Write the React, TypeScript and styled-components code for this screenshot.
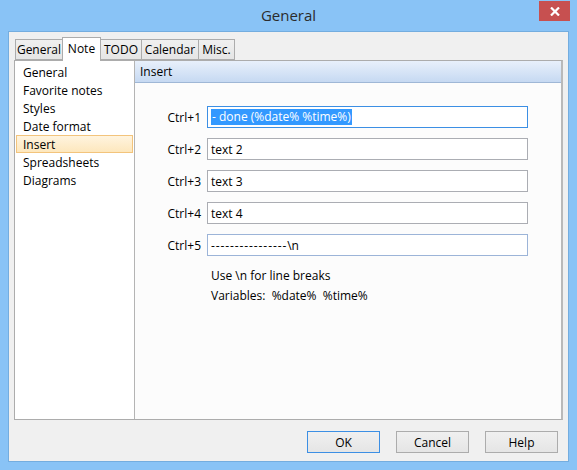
import * as React from 'react';
import styled, { createGlobalStyle, css } from 'styled-components';

const GlobalStyle = createGlobalStyle`
  html, body {
    margin: 0;
    padding: 0;
    background: #88c2f5;
  }
  body {
    font-family: "Segoe UI", "Open Sans", "Noto Sans", sans-serif;
    font-size: 12px;
    color: #000;
  }
`;

const Window = styled.div`
  width: 577px;
  height: 470px;
  background: #89c3f6;
  box-sizing: border-box;
  display: flex;
  flex-direction: column;
`;

const TitleBar = styled.div`
  position: relative;
  height: 31px;
  display: flex;
  align-items: center;
  justify-content: center;
  padding-bottom: 1px;
  box-sizing: border-box;
`;

const Title = styled.span`
  font-size: 15px;
  color: #2b2b2b;
`;

const CloseButton = styled.div`
  position: absolute;
  top: 1px;
  right: 7px;
  width: 31px;
  height: 20px;
  background: #c75050;
  display: flex;
  align-items: center;
  justify-content: center;
`;

const Client = styled.div`
  margin: 0 8px;
  height: 431px;
  box-sizing: border-box;
  background: #f0f0f0;
  border: 1px solid #74addf;
  display: flex;
  flex-direction: column;
`;

const TabRow = styled.div`
  display: flex;
  align-items: flex-end;
  padding: 5px 0 0 6px;
`;

const Tab = styled.div<{ $w: number; $active?: boolean }>`
  width: ${p => p.$w}px;
  height: 21px;
  box-sizing: border-box;
  border: 1px solid #acacac;
  border-left-width: 0;
  background: linear-gradient(#f0f0f0, #e5e5e5);
  display: flex;
  align-items: center;
  justify-content: center;
  padding-bottom: 1px;
  &:first-child {
    border-left-width: 1px;
  }
  ${p => p.$active && css`
    height: 24px;
    margin-bottom: -1px;
    background: #fff;
    border-bottom: none;
    border-left-width: 1px;
    margin-left: -1px;
    position: relative;
    z-index: 1;
    padding-bottom: 3px;
  `}
`;

const Page = styled.div`
  margin: 0 5px;
  height: 360px;
  box-sizing: border-box;
  border: 1px solid #acacac;
  border-right: 2px solid #b9b9b9;
  display: flex;
  background: #fcfcfc;
`;

const List = styled.div`
  width: 117px;
  border-right: 1px solid #b4b4b4;
  background: #fff;
  padding: 2px 1px 0 1px;
  box-sizing: content-box;
`;

const ListItem = styled.div<{ $selected?: boolean }>`
  height: 18px;
  line-height: 17px;
  padding-left: 6px;
  box-sizing: border-box;
  border: 1px solid transparent;
  ${p => p.$selected && css`
    border-color: #f3c47c;
    background: linear-gradient(#fff4df, #fde7bd);
  `}
`;

const Panel = styled.div`
  flex: 1;
  display: flex;
  flex-direction: column;
`;

const PanelHeader = styled.div`
  height: 22px;
  box-sizing: border-box;
  padding-left: 5px;
  display: flex;
  align-items: center;
  background: linear-gradient(#e8f0fb, #c6d9f2);
  border-bottom: 1px solid #9fb7d6;
`;

const Form = styled.div`
  display: grid;
  grid-template-columns: 66px 321px;
  column-gap: 6px;
  row-gap: 10px;
  padding-top: 23px;
  align-items: center;
`;

const Label = styled.span`
  text-align: right;
`;

const Field = styled.div<{ $state?: 'focus' | 'hover' }>`
  height: 22px;
  box-sizing: border-box;
  border: 1px solid #abadb3;
  background: #fff;
  display: flex;
  align-items: center;
  padding: 0 3px;
  white-space: pre;
  ${p => p.$state === 'focus' && css`border-color: #3c8fe4;`}
  ${p => p.$state === 'hover' && css`border-color: #9cb4d8;`}
`;

const Selection = styled.span`
  background: #3399ff;
  color: #fff;
  line-height: 16px;
  padding: 0 1px;
`;

const Dashes = styled.span`
  letter-spacing: 0.9px;
`;

const Notes = styled.div`
  padding: 10px 0 0 76px;
  line-height: 20px;
  white-space: pre;
`;

const ButtonRow = styled.div`
  display: flex;
  justify-content: flex-end;
  gap: 16px;
  padding: 11px 10px 0 0;
`;

const Button = styled.div<{ $default?: boolean }>`
  width: 73px;
  height: 22px;
  box-sizing: border-box;
  border: 1px solid ${p => (p.$default ? '#3c8fe4' : '#acacac')};
  background: linear-gradient(#f0f0f0, #e5e5e5);
  display: flex;
  align-items: center;
  justify-content: center;
`;

const tabs = [
  { label: 'General', w: 48 },
  { label: 'Note', w: 39, active: true },
  { label: 'TODO', w: 41 },
  { label: 'Calendar', w: 57 },
  { label: 'Misc.', w: 36 },
];

const items = ['General', 'Favorite notes', 'Styles', 'Date format', 'Insert', 'Spreadsheets', 'Diagrams'];

export default function App() {
  return (
    <>
      <GlobalStyle />
      <Window>
        <TitleBar>
          <Title>General</Title>
          <CloseButton>
            <svg width="10" height="9" viewBox="0 0 10 9">
              <path d="M1 0.5 L9 8.5 M9 0.5 L1 8.5" stroke="#fff" strokeWidth="2.2" />
            </svg>
          </CloseButton>
        </TitleBar>
        <Client>
          <TabRow>
            {tabs.map(t => (
              <Tab key={t.label} $w={t.w} $active={t.active}>{t.label}</Tab>
            ))}
          </TabRow>
          <Page>
            <List>
              {items.map(i => (
                <ListItem key={i} $selected={i === 'Insert'}>{i}</ListItem>
              ))}
            </List>
            <Panel>
              <PanelHeader>Insert</PanelHeader>
              <Form>
                <Label>Ctrl+1</Label>
                <Field $state="focus"><Selection>- done (%date% %time%)</Selection></Field>
                <Label>Ctrl+2</Label>
                <Field>text 2</Field>
                <Label>Ctrl+3</Label>
                <Field>text 3</Field>
                <Label>Ctrl+4</Label>
                <Field>text 4</Field>
                <Label>Ctrl+5</Label>
                <Field $state="hover"><Dashes>----------------</Dashes>{'\\n'}</Field>
              </Form>
              <Notes>
                <div>{'Use \\n for line breaks'}</div>
                <div>{'Variables:  %date%  %time%'}</div>
              </Notes>
            </Panel>
          </Page>
          <ButtonRow>
            <Button $default>OK</Button>
            <Button>Cancel</Button>
            <Button>Help</Button>
          </ButtonRow>
        </Client>
      </Window>
    </>
  );
}
